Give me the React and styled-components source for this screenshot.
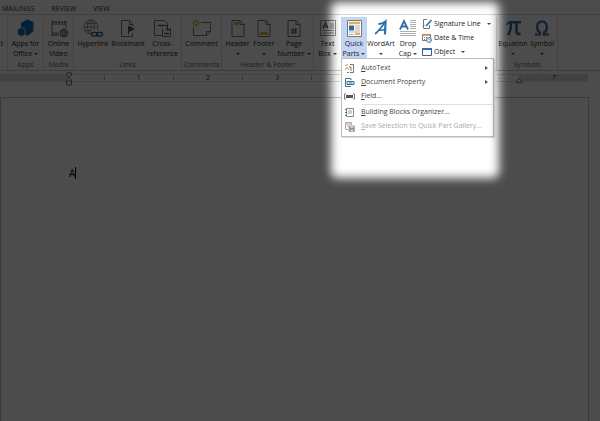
import React from "react";
import styled, { createGlobalStyle } from "styled-components";

const Global = createGlobalStyle`
  * { box-sizing: border-box; }
  body { margin: 0; background: #fff; }
`;

const Window = styled.div`
  position: relative;
  display: flex;
  flex-direction: column;
  min-height: 100vh;
  overflow: hidden;
  background: #fff;
  color: #333;
  font: 7px/10px "Open Sans", sans-serif;
`;

const Tabs = styled.nav`
  display: flex;
  gap: 17px;
  height: 15px;
  padding: 3px 0 0 2px;
  border-bottom: 1px solid #d5d5d5;
`;

const Tab = styled.button`
  border: 0;
  padding: 0;
  background: none;
  color: #333;
  font: inherit;
`;

const Ribbon = styled.div`
  display: flex;
  height: 56px;
  border-bottom: 1px solid #c8c8c8;
`;

const Group = styled.section`
  display: flex;
  flex: none;
  flex-direction: column;
  justify-content: space-between;
  width: ${(p) => p.$width}px;
  margin-top: 2px;
  border-right: 1px solid #dcdcdc;
`;

const Controls = styled.div`
  display: flex;
  justify-content: ${(p) => (p.$start ? "flex-start" : "center")};
`;

const GroupLabel = styled.div`
  color: #666;
  line-height: 11px;
  text-align: center;
  white-space: nowrap;
`;

const BigButton = styled.button`
  display: flex;
  flex: none;
  flex-direction: column;
  align-items: center;
  width: ${(p) => p.$width}px;
  height: 42px;
  padding: 0;
  border: 0;
  background: ${(p) => (p.$active ? "#c2d5f2" : "none")};
  color: #222;
  font: inherit;
  white-space: nowrap;

  svg { flex: none; }
`;

const Line = styled.span`
  display: flex;
  align-items: center;
  justify-content: center;
  gap: 2px;
  height: 10px;
`;

const Arrow = styled.i`
  border: 2px solid transparent;
  border-top-color: #444;
  border-bottom: 0;
`;

const SideArrow = styled.i`
  margin-left: auto;
  border: 2px solid transparent;
  border-left: 3px solid #555;
  border-right: 0;
`;

const SmallColumn = styled.div`
  display: flex;
  flex-direction: column;
  margin-left: 1px;
`;

const SmallButton = styled.button`
  display: flex;
  align-items: center;
  gap: 2px;
  height: 14px;
  padding: 0;
  border: 0;
  background: none;
  color: #222;
  font: inherit;
  white-space: nowrap;

  i { margin-left: 4px; }
`;

const MenuAnchor = styled.div`
  position: relative;
`;

const Menu = styled.div`
  position: absolute;
  z-index: 2;
  top: 41px;
  left: 0;
  width: 153px;
  padding: 2px 1px 3px;
  border: 1px solid #bdbdbd;
  background: #fff;
  box-shadow: 1px 1px 1px #ddd;
`;

const MenuItem = styled.button`
  display: flex;
  align-items: center;
  gap: 6px;
  width: 100%;
  height: 14px;
  padding: 0 4px 0 1px;
  border: 0;
  background: none;
  color: ${(p) => (p.disabled ? "#a8a8a8" : "#444")};
  font: inherit;
  white-space: nowrap;
`;

const Divider = styled.hr`
  height: 1px;
  margin: 1px 0 0 19px;
  border: 0;
  background: #dedede;
`;

const Ruler = styled.div`
  position: relative;
  display: flex;
  height: 8px;
  margin: 3px 12px 0 0;
  border: solid #dcdcdc;
  border-width: 1px 0;
  color: #444;
  line-height: 6px;
`;

const Margin = styled.div`
  display: flex;
  width: 69px;
  background: #dedede;
`;

const Track = styled.div`
  display: flex;
  flex: 1;
`;

const Inch = styled.div`
  display: flex;
  flex: ${(p) => p.$span};
  align-items: center;
  justify-content: space-between;
`;

const Tick = styled.i`
  width: 1px;
  height: ${(p) => (p.$tall ? 4 : 1)}px;
  background: #b0b0b0;
`;

const Marker = styled.svg`
  position: absolute;
  top: ${(p) => p.$top}px;
  ${(p) => p.$side}: 65px;
`;

const Sheet = styled.main`
  flex: 1;
  margin: 15px 11px 0 0;
  padding: 69px 68px 0;
  border: 1px solid #c4c4c4;
  border-bottom: 0;
  font-size: 10px;
  line-height: 13px;
  color: #000;
`;

const Paragraph = styled.p`
  display: flex;
  margin: 0;
`;

const Caret = styled.span`
  width: 1px;
  height: 12px;
  background: #000;
`;

const Shade = styled.div`
  position: absolute;
  inset: 0;
  z-index: 5;
  overflow: hidden;
  pointer-events: none;
`;

const Spotlight = styled.div`
  position: absolute;
  top: 2px;
  left: 331px;
  width: 168px;
  height: 176px;
  border-radius: 6px;
  box-shadow: 0 0 0 2000px rgba(0, 0, 0, 0.7);
  filter: blur(5px);
`;

const Svg = ({ w = 22, h = 22, children }) => (
  <svg width={w} height={h} viewBox={`0 0 ${w} ${h}`} fill="none" stroke="#777" aria-hidden="true">
    {children}
  </svg>
);

const Doc = ({ children }) => (
  <Svg>
    <path d="M5 3.500h8l4 4v12h-12zM13 3.500v4h4" />
    {children}
  </Svg>
);

const Globe = ({ x, y, r, color = "#777" }) => (
  <g transform={`translate(${x} ${y})`} stroke={color} strokeWidth=".8">
    <circle r={r} />
    <ellipse rx={r / 2} ry={r} />
    <path d={`M${-r} 0H${r}M0 ${-r}V${r}M${-r * 0.85} ${-r / 2}H${r * 0.85}M${-r * 0.85} ${r / 2}H${r * 0.85}`} strokeWidth=".7" />
  </g>
);

const icons = {
  apps: (
    <Svg>
      <path d="M6 6l6-3.500 6.500 2.500v9l-6 5-6.500-4z" fill="#0f6ab4" stroke="none" />
      <path d="M2.500 12.500l3.500-2 4 2v5l-3.500 2-4-2z" fill="#0f6ab4" stroke="#fff" strokeWidth=".7" />
    </Svg>
  ),
  video: (
    <Svg>
      <path d="M4 4v15M18 4v7M4 7h14M4 16h7" />
      <path d="M4 5h14M4 18h7" strokeDasharray="2 1" strokeWidth="2" />
      <Globe x={16} y={16} r={4} color="#2f73ad" />
    </Svg>
  ),
  link: (
    <Svg>
      <Globe x={9} y={10} r={7} />
      <rect x="9" y="13" width="13" height="7" fill="#fff" stroke="none" />
      <g stroke="#2f6a9e" strokeWidth="1.500">
        <rect x="9.500" y="15.500" width="6" height="3.500" rx="1.700" />
        <rect x="14.500" y="15.500" width="6" height="3.500" rx="1.700" />
      </g>
    </Svg>
  ),
  bookmark: (
    <Svg>
      <path d="M15.500 16v3.500h-11v-16h8l3 3v3M12.500 3.500v4h3" />
      <path d="M11.500 9v8.500" stroke="#35618b" />
      <path d="M12 9l6 3-6 3z" fill="#35618b" stroke="none" />
    </Svg>
  ),
  cross: (
    <Svg>
      <path d="M10 18.500H2.500v-15h10l3 3V9M18.500 11v8.500h-8v-8" />
      <path d="M6 8.500h6M12 16.500h5" stroke="#c53b32" strokeWidth="1.500" />
      <path d="M12 8q4 0 4 4v1M14 11l2 3 3-3" stroke="#555" />
    </Svg>
  ),
  comment: (
    <Svg w={24}>
      <path d="M11 5.500h9.500v9l-4 4H3.500v-8M16.500 18.500v-4h4" />
      <path d="M6 1.500v9M1.500 6h9M3 3l6 6M9 3l-6 6" stroke="#e0a93c" strokeWidth=".8" />
      <circle cx="6" cy="6" r="2" fill="#fff" stroke="#e0a93c" />
    </Svg>
  ),
  header: <Doc><path d="M7 6.500h5" stroke="#dca837" strokeWidth="2.500" /></Doc>,
  footer: <Doc><path d="M7 16.500h8" stroke="#dca837" strokeWidth="2.500" /></Doc>,
  number: <Doc><path d="M10.500 11l-1 6M13 11l-1 6M8 12.800h6M8 15.200h6" stroke="#2f6a9e" /></Doc>,
  textbox: (
    <Svg>
      <path d="M3.500 3.500h15v15h-15zM13 7h4M13 9h4M13 11h4M6 13.500h11M6 16h11" strokeWidth=".8" />
      <path d="M6 11.500l2.500-6 2.500 6M7 9.500h3" stroke="#35618b" strokeWidth="1.300" />
    </Svg>
  ),
  parts: (
    <Svg>
      <path d="M4.500 3.500h14v16h-14z" fill="#fff" />
      <path d="M6 6h11" stroke="#e8b04a" strokeWidth="2.500" />
      <path d="M6 11h5" stroke="#2f6a9e" strokeWidth="5" />
      <path d="M12 9h5M12 11h5M12 13h5M6 15h11M6 17.500h5" stroke="#999" strokeWidth=".8" />
      <path d="M12 17h5" stroke="#e8b04a" strokeWidth="2" />
    </Svg>
  ),
  wordart: (
    <Svg>
      <path d="M5 17Q9 14 15.500 4.500" stroke="#2e6fae" strokeWidth="1.600" />
      <path d="M8.500 7q4 0 7-2.500l-.5 13" stroke="#2e6fae" strokeWidth="2.200" />
      <path d="M8 13q4 1 8-1" stroke="#2e6fae" strokeWidth="1.500" />
    </Svg>
  ),
  dropcap: (
    <Svg>
      <path d="M13 3.500h6M13 5.500h6M13 7.500h6M13 9.500h6M13 11.500h6M3 14.500h16M3 16.500h16M3 18.500h16" stroke="#999" strokeWidth=".8" />
      <path d="M3 12.500L7 4l4 8.500M4.500 9.500h5" stroke="#2e6fae" strokeWidth="1.800" />
    </Svg>
  ),
  pi: (
    <Svg>
      <path d="M4 8q1-4 5-4h10v2.500H8Q6 6.500 5 8z" fill="#3a6ca4" stroke="none" />
      <path d="M9 6q0 8-3 12M14.500 6v9q0 3 4 1.500" stroke="#3a6ca4" strokeWidth="2.500" />
    </Svg>
  ),
  omega: (
    <Svg>
      <path d="M4 17.500h5v-2c-4-2-4-11 2-11s6 9 2 11v2h5" stroke="#3a6ca4" strokeWidth="2.200" />
    </Svg>
  ),
  signature: (
    <Svg w={10} h={10}>
      <path d="M5 .5H1.500v9h6V6M.5 7l2-1" />
      <path d="M9.500 1L4 7" stroke="#2e6fae" strokeWidth="1.600" />
    </Svg>
  ),
  date: (
    <Svg w={10} h={10}>
      <path d="M.5 1.500h8v6h-8z" />
      <path d="M1 2h7" stroke="#d58a45" strokeWidth="1.500" />
      <path d="M2 4.500h4M2 6.500h3" strokeDasharray="1 1" />
      <circle cx="7" cy="7" r="2.400" fill="#fff" stroke="#3a6ca4" />
      <path d="M7 5.500V7h1.500" strokeWidth=".7" />
    </Svg>
  ),
  object: (
    <Svg w={10} h={10}>
      <path d="M.5 1.500h9v7h-9z" fill="#fff" stroke="#35618b" />
      <path d="M0 2h10" stroke="#2e6fae" strokeWidth="2" />
    </Svg>
  ),
  autotext: (
    <Svg w={11} h={11}>
      <path d="M6 1.500h3.500v8H6M3 9.500h2" />
      <path d="M1 7l2-3 2 3M3 1v2M1 2l1 1" stroke="#d79b48" />
      <path d="M5 4h2v4" />
    </Svg>
  ),
  property: (
    <Svg w={11} h={11}>
      <path d="M7 3V1.500H1.500v8H7" stroke="#4b718f" />
      <path d="M3 4.500h7v3H3z" fill="#fff" stroke="#2e6f9f" />
      <path d="M4.500 6h4" stroke="#2e6f9f" />
    </Svg>
  ),
  field: (
    <Svg w={11} h={11}>
      <path d="M2 3H.5v5H2M9 3h1.500v5H9" />
      <path d="M2 5.500h7" stroke="#555" strokeWidth="3" />
    </Svg>
  ),
  organizer: (
    <Svg w={11} h={11}>
      <path d="M2.500 1.500h7v8h-7z" stroke="#888" />
      <path d="M4 4h4M4 6h4" stroke="#7ba9c4" />
      <path d="M1 2.500h2M1 5.500h2M1 8.500h2" stroke="#3d8064" />
    </Svg>
  ),
  save: (
    <Svg w={11} h={11}>
      <g stroke="#aaa">
        <path d="M4 8.500H1.500v-7h6V4M2 3h5M3 5h2" />
        <path d="M5 5h5.500v5.500H5z" fill="#999" />
        <path d="M6.500 6h3M7 9.500h2" stroke="#fff" />
      </g>
    </Svg>
  ),
};

const Big = ({ icon, width, lines, arrow, active }) => (
  <BigButton $width={width} $active={active}>
    {icons[icon]}
    {lines.map((text, i) => (
      <Line key={text}>
        {text}
        {arrow && lines.length > 1 && i === lines.length - 1 && <Arrow />}
      </Line>
    ))}
    {arrow && lines.length === 1 && <Line><Arrow /></Line>}
  </BigButton>
);

const Small = ({ icon, text, arrow }) => (
  <SmallButton>{icons[icon]}{text}{arrow && <Arrow />}</SmallButton>
);

const Item = ({ icon, text, more, disabled }) => (
  <MenuItem role="menuitem" disabled={disabled}>
    {icons[icon]}
    <span><u>{text[0]}</u>{text.slice(1)}</span>
    {more && <SideArrow />}
  </MenuItem>
);

const Dots = ({ tall }) => (
  <>
    <Tick $tall={tall} /><Tick /><Tick /><Tick />
  </>
);

export default function App() {
  return (
    <Window>
      <Global />
      <Tabs aria-label="Ribbon tabs">
        <Tab>MAILINGS</Tab>
        <Tab>REVIEW</Tab>
        <Tab>VIEW</Tab>
      </Tabs>
      <Ribbon>
        <Group $width={8}>
          <Controls $start><BigButton $width={4}><Svg w={4} /><Line>t</Line></BigButton></Controls>
        </Group>
        <Group $width={36}>
          <Controls><Big icon="apps" width={35} lines={["Apps for", "Office"]} arrow /></Controls>
          <GroupLabel>Apps</GroupLabel>
        </Group>
        <Group $width={30}>
          <Controls><Big icon="video" width={29} lines={["Online", "Video"]} /></Controls>
          <GroupLabel>Media</GroupLabel>
        </Group>
        <Group $width={108}>
          <Controls>
            <Big icon="link" width={35} lines={["Hyperlink"]} />
            <Big icon="bookmark" width={35} lines={["Bookmark"]} />
            <Big icon="cross" width={34} lines={["Cross-", "reference"]} />
          </Controls>
          <GroupLabel>Links</GroupLabel>
        </Group>
        <Group $width={40}>
          <Controls><Big icon="comment" width={39} lines={["Comment"]} /></Controls>
          <GroupLabel>Comments</GroupLabel>
        </Group>
        <Group $width={92}>
          <Controls>
            <Big icon="header" width={27} lines={["Header"]} arrow />
            <Big icon="footer" width={26} lines={["Footer"]} arrow />
            <Big icon="number" width={34} lines={["Page", "Number"]} arrow />
          </Controls>
          <GroupLabel>Header &amp; Footer</GroupLabel>
        </Group>
        <Group $width={183}>
          <Controls $start>
            <Big icon="textbox" width={27} lines={["Text", "Box"]} arrow />
            <MenuAnchor>
              <Big icon="parts" width={26} lines={["Quick", "Parts"]} arrow active />
              <Menu role="menu">
                <Item icon="autotext" text="AutoText" more />
                <Item icon="property" text="Document Property" more />
                <Item icon="field" text="Field..." />
                <Divider />
                <Item icon="organizer" text="Building Blocks Organizer..." />
                <Item icon="save" text="Save Selection to Quick Part Gallery..." disabled />
              </Menu>
            </MenuAnchor>
            <Big icon="wordart" width={28} lines={["WordArt"]} arrow />
            <Big icon="dropcap" width={26} lines={["Drop", "Cap"]} arrow />
            <SmallColumn>
              <Small icon="signature" text="Signature Line" arrow />
              <Small icon="date" text="Date & Time" />
              <Small icon="object" text="Object" arrow />
            </SmallColumn>
          </Controls>
        </Group>
        <Group $width={61}>
          <Controls>
            <Big icon="pi" width={30} lines={["Equation"]} arrow />
            <Big icon="omega" width={28} lines={["Symbol"]} arrow />
          </Controls>
          <GroupLabel>Symbols</GroupLabel>
        </Group>
      </Ribbon>
      <Ruler>
        <Margin />
        <Track>
          <Inch $span={1}><Dots /></Inch>
          {["1", "2", "3", "", "", ""].map((label, i) => (
            <Inch key={i} $span={2}><Dots tall />{label}<Tick /><Tick /><Tick /><i /></Inch>
          ))}
        </Track>
        <Margin><Inch $span={1}><Dots />7<Tick /><Tick /><Tick /><i /></Inch></Margin>
        <Marker $top={-3} $side="left" width="8" height="15" fill="#fff" stroke="#777">
          <path d="M1.500 1h5v2l-2.500 2.500 2.500 2.500v5h-5V8L4 5.500 1.500 3zM1.500 9h5" />
        </Marker>
        <Marker $top={2} $side="right" width="8" height="7" fill="#fff" stroke="#777">
          <path d="M1.500 5.500V4L4 1.500 6.500 4v1.500z" />
        </Marker>
      </Ruler>
      <Sheet>
        <Paragraph>A<Caret /></Paragraph>
      </Sheet>
      <Shade><Spotlight /></Shade>
    </Window>
  );
}
